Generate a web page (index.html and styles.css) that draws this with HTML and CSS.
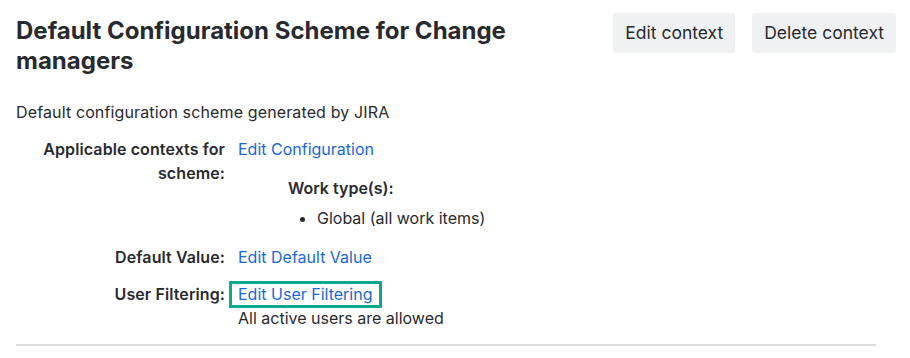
FILE: index.html
```html
<!DOCTYPE html>
<html lang="en">
<head>
    <meta charset="UTF-8">
    <title>Default Configuration Scheme for Change managers</title>
    <link rel="stylesheet" href="styles.css">
</head>
<body>
    <div class="page">
        <div class="header">
            <h1>Default Configuration Scheme for Change managers</h1>
            <div class="actions">
                <button class="btn">Edit context</button>
                <button class="btn">Delete context</button>
            </div>
        </div>

        <p class="description">Default configuration scheme generated by JIRA</p>

        <div class="fields">
            <div class="field-label">Applicable contexts for scheme:</div>
            <div class="field-value">
                <a href="#">Edit Configuration</a>
                <div class="context-block">
                    <strong>Work type(s):</strong>
                    <ul>
                        <li>Global (all work items)</li>
                    </ul>
                </div>
            </div>

            <div class="field-label">Default Value:</div>
            <div class="field-value">
                <a href="#">Edit Default Value</a>
            </div>

            <div class="field-label">User Filtering:</div>
            <div class="field-value">
                <a href="#" class="highlighted">Edit User Filtering</a>
                <div>All active users are allowed</div>
            </div>
        </div>

        <hr class="divider">
    </div>
</body>
</html>
```

FILE: styles.css
```css
body {
    margin: 0;
    font-family: Inter, "Noto Sans", sans-serif;
    font-size: 16px;
    line-height: 24px;
    color: #292a2e;
    background-color: #fff;
}
.page {
    padding: 13px 14px 0 16px;
}
.header {
    display: flex;
    justify-content: space-between;
    align-items: flex-start;
}
h1 {
    margin: 3px 0 0;
    font-size: 24px;
    line-height: 30px;
    font-weight: 700;
    max-width: 560px;
}
.actions {
    display: flex;
    gap: 17px;
}
.btn {
    font-family: inherit;
    font-size: 17.5px;
    line-height: 24px;
    color: #292a2e;
    background-color: #f0f1f2;
    border: none;
    border-radius: 3px;
    padding: 8px 12px;
    cursor: pointer;
}
.description {
    margin: 24px 0 0;
    letter-spacing: 0.13px;
}
.fields {
    display: grid;
    grid-template-columns: 200px 1fr;
    column-gap: 13px;
    row-gap: 13px;
    margin: 13px 0 0 9px;
}
.field-label {
    text-align: right;
    font-weight: 600;
    letter-spacing: 0.1px;
}
.field-value a {
    color: #1868db;
    text-decoration: none;
}
.context-block {
    margin: 15px 0 0 50px;
}
.context-block strong {
    display: block;
    font-weight: 600;
}
.context-block ul {
    margin: 6px 0 2px;
    padding-left: 29px;
}
.highlighted {
    position: relative;
}
.highlighted::after {
    content: "";
    position: absolute;
    top: -3px;
    bottom: -4px;
    left: -9px;
    right: -10px;
    border: 3px solid #0ea98c;
}
.divider {
    margin: 14px 20px 0 0;
    border: none;
    border-top: 2px solid #dddddd;
}
```
